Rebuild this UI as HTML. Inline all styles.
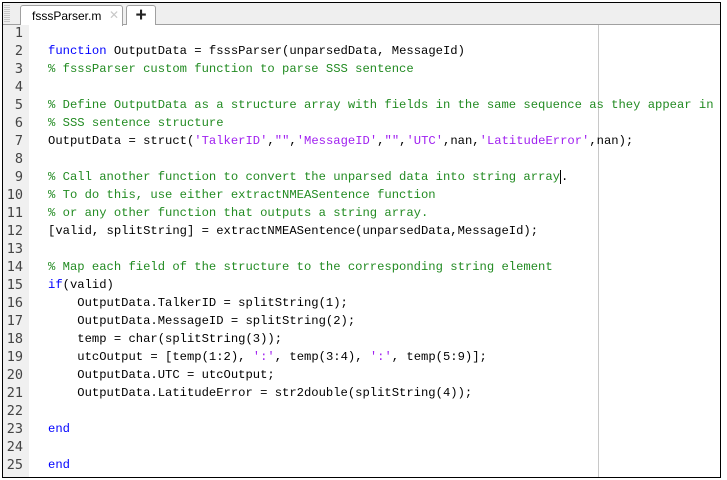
<!DOCTYPE html>
<html><head><meta charset="utf-8"><style>
html,body{margin:0;padding:0;background:#fff;width:727px;height:480px;overflow:hidden}
.frame{position:absolute;left:2px;top:2px;width:717px;height:474px;border:1px solid #000;background:#fff;overflow:hidden}
.tabbar{position:absolute;left:0;top:0;width:717px;height:21px;background:#efefef;border-bottom:1px solid #a0a0a0}
.grip{position:absolute;left:1px;top:2px;width:6px;height:18px;background:repeating-linear-gradient(#c8c8c8 0 1px,#efefef 1px 2px)}
.tab{position:absolute;left:17px;top:2px;width:101px;height:20px;background:#fff;border:1px solid #a0a0a0;border-bottom:none;border-radius:3px 3px 0 0;font:12px "Liberation Sans",sans-serif;color:#000}
.tab span{position:absolute;left:11px;top:3px}
.tab i{position:absolute;left:88px;top:2px;color:#c8c8c8;font-style:normal;font-size:12px}
.plus{position:absolute;left:123px;top:2px;width:28px;height:19px;background:#fff;border:1px solid #a0a0a0;border-bottom:none;border-radius:3px 3px 0 0;font:bold 19px "Liberation Sans",sans-serif;text-align:center;line-height:19px;color:#222}
.gutter{position:absolute;left:0;top:22px;width:26px;height:460px;background:#f0f0f0}
.margin{position:absolute;left:595px;top:22px;width:1px;height:460px;background:#c8c8c8}
.nums,.code{position:absolute;top:21px;line-height:18px;white-space:pre}
.nums{left:0;width:20px;text-align:right;color:#444;font:13.5px "DejaVu Sans Mono",monospace;line-height:18px}
.code{left:45px;color:#000;font:12.2px "Liberation Mono",monospace;line-height:18px}
.k{color:#0000ff}.c{color:#228b22}.s{color:#a020f0}
.cur{border-left:1px solid #000}
</style></head><body><div class="frame">
<div class="tabbar"><div class="grip"></div><div class="tab"><span>fsssParser.m</span><i>✕</i></div><div class="plus">+</div></div>
<div class="gutter"></div><div class="margin"></div>
<div class="nums">1
2
3
4
5
6
7
8
9
10
11
12
13
14
15
16
17
18
19
20
21
22
23
24
25</div>
<div class="code">
<span class="k">function</span> OutputData = fsssParser(unparsedData, MessageId)
<span class="c">% fsssParser custom function to parse SSS sentence</span>

<span class="c">% Define OutputData as a structure array with fields in the same sequence as they appear in</span>
<span class="c">% SSS sentence structure</span>
OutputData = struct(<span class="s">'TalkerID'</span>,<span class="s">""</span>,<span class="s">'MessageID'</span>,<span class="s">""</span>,<span class="s">'UTC'</span>,nan,<span class="s">'LatitudeError'</span>,nan);

<span class="c">% Call another function to convert the unparsed data into string array</span><span class="cur"></span>.
<span class="c">% To do this, use either extractNMEASentence function</span>
<span class="c">% or any other function that outputs a string array.</span>
[valid, splitString] = extractNMEASentence(unparsedData,MessageId);

<span class="c">% Map each field of the structure to the corresponding string element</span>
<span class="k">if</span>(valid)
    OutputData.TalkerID = splitString(1);
    OutputData.MessageID = splitString(2);
    temp = char(splitString(3));
    utcOutput = [temp(1:2), <span class="s">':'</span>, temp(3:4), <span class="s">':'</span>, temp(5:9)];
    OutputData.UTC = utcOutput;
    OutputData.LatitudeError = str2double(splitString(4));

<span class="k">end</span>

<span class="k">end</span></div>
</div></body></html>
